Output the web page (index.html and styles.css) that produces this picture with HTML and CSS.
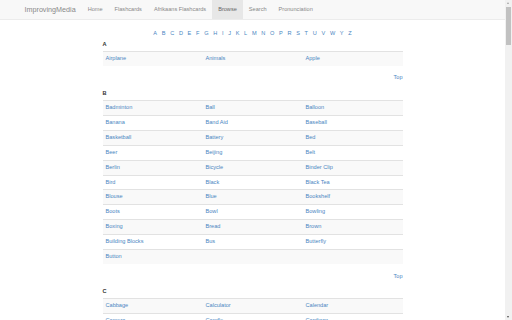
FILE: index.html
```html
<!DOCTYPE html>
<html lang="en">
<head>
    <meta charset="UTF-8">
    <meta name="viewport" content="width=device-width, initial-scale=1.0">
    <title>ImprovingMedia - Browse</title>
    <link rel="stylesheet" href="styles.css">
</head>
<body>
    <nav class="navbar">
        <div class="nav-inner">
            <a class="brand" href="#">ImprovingMedia</a>
            <ul class="nav-links">
                <li><a href="#">Home</a></li>
                <li><a href="#">Flashcards</a></li>
                <li><a href="#">Afrikaans Flashcards</a></li>
                <li class="active"><a href="#">Browse</a></li>
                <li><a href="#">Search</a></li>
                <li><a href="#">Pronunciation</a></li>
            </ul>
        </div>
    </nav>
    <div class="page" id="top">
        <div class="alphabet">
            <a href="#A">A</a><a href="#B">B</a><a href="#C">C</a><a href="#D">D</a><a href="#E">E</a><a href="#F">F</a><a href="#G">G</a><a href="#H">H</a><a href="#I">I</a><a href="#J">J</a><a href="#K">K</a><a href="#L">L</a><a href="#M">M</a><a href="#N">N</a><a href="#O">O</a><a href="#P">P</a><a href="#R">R</a><a href="#S">S</a><a href="#T">T</a><a href="#U">U</a><a href="#V">V</a><a href="#W">W</a><a href="#Y">Y</a><a href="#Z">Z</a>
        </div>

        <div class="letter-section" id="A">
            <h5>A</h5>
            <table class="word-table">
                <tr><td><a href="#">Airplane</a></td><td><a href="#">Animals</a></td><td><a href="#">Apple</a></td></tr>
            </table>
            <div class="top-link"><a href="#top">Top</a></div>
        </div>

        <div class="letter-section" id="B">
            <h5>B</h5>
            <table class="word-table">
                <tr><td><a href="#">Badminton</a></td><td><a href="#">Ball</a></td><td><a href="#">Balloon</a></td></tr>
                <tr><td><a href="#">Banana</a></td><td><a href="#">Band Aid</a></td><td><a href="#">Baseball</a></td></tr>
                <tr><td><a href="#">Basketball</a></td><td><a href="#">Battery</a></td><td><a href="#">Bed</a></td></tr>
                <tr><td><a href="#">Beer</a></td><td><a href="#">Beijing</a></td><td><a href="#">Belt</a></td></tr>
                <tr><td><a href="#">Berlin</a></td><td><a href="#">Bicycle</a></td><td><a href="#">Binder Clip</a></td></tr>
                <tr><td><a href="#">Bird</a></td><td><a href="#">Black</a></td><td><a href="#">Black Tea</a></td></tr>
                <tr><td><a href="#">Blouse</a></td><td><a href="#">Blue</a></td><td><a href="#">Bookshelf</a></td></tr>
                <tr><td><a href="#">Boots</a></td><td><a href="#">Bowl</a></td><td><a href="#">Bowling</a></td></tr>
                <tr><td><a href="#">Boxing</a></td><td><a href="#">Bread</a></td><td><a href="#">Brown</a></td></tr>
                <tr><td><a href="#">Building Blocks</a></td><td><a href="#">Bus</a></td><td><a href="#">Butterfly</a></td></tr>
                <tr><td><a href="#">Button</a></td><td></td><td></td></tr>
            </table>
            <div class="top-link"><a href="#top">Top</a></div>
        </div>

        <div class="letter-section" id="C">
            <h5>C</h5>
            <table class="word-table">
                <tr><td><a href="#">Cabbage</a></td><td><a href="#">Calculator</a></td><td><a href="#">Calendar</a></td></tr>
                <tr><td><a href="#">Camera</a></td><td><a href="#">Candle</a></td><td><a href="#">Cardigan</a></td></tr>
                <tr><td><a href="#">Carrot</a></td><td><a href="#">Cat</a></td><td><a href="#">Chair</a></td></tr>
                <tr><td><a href="#">Cheese</a></td><td><a href="#">Chicken</a></td><td><a href="#">Clock</a></td></tr>
                <tr><td><a href="#">Cloud</a></td><td><a href="#">Coffee</a></td><td><a href="#">Computer</a></td></tr>
                <tr><td><a href="#">Cow</a></td><td><a href="#">Cup</a></td><td></td></tr>
            </table>
            <div class="top-link"><a href="#top">Top</a></div>
        </div>

        <div class="letter-section" id="D">
            <h5>D</h5>
            <table class="word-table">
                <tr><td><a href="#">Dance</a></td><td><a href="#">Desk</a></td><td><a href="#">Dog</a></td></tr>
                <tr><td><a href="#">Door</a></td><td><a href="#">Dress</a></td><td><a href="#">Duck</a></td></tr>
            </table>
            <div class="top-link"><a href="#top">Top</a></div>
        </div>

        <div class="letter-section" id="E">
            <h5>E</h5>
            <table class="word-table">
                <tr><td><a href="#">Ear</a></td><td><a href="#">Egg</a></td><td><a href="#">Elephant</a></td></tr>
                <tr><td><a href="#">Eye</a></td><td></td><td></td></tr>
            </table>
            <div class="top-link"><a href="#top">Top</a></div>
        </div>

        <div class="letter-section" id="F">
            <h5>F</h5>
            <table class="word-table">
                <tr><td><a href="#">Fish</a></td><td><a href="#">Flower</a></td><td><a href="#">Fork</a></td></tr>
                <tr><td><a href="#">Friday</a></td><td><a href="#">Frog</a></td><td></td></tr>
            </table>
            <div class="top-link"><a href="#top">Top</a></div>
        </div>

        <div class="letter-section" id="G">
            <h5>G</h5>
            <table class="word-table">
                <tr><td><a href="#">Garden</a></td><td><a href="#">Glass</a></td><td><a href="#">Grapes</a></td></tr>
                <tr><td><a href="#">Green</a></td><td></td><td></td></tr>
            </table>
            <div class="top-link"><a href="#top">Top</a></div>
        </div>

        <div class="letter-section" id="H">
            <h5>H</h5>
            <table class="word-table">
                <tr><td><a href="#">Hair</a></td><td><a href="#">Hammer</a></td><td><a href="#">Hand</a></td></tr>
                <tr><td><a href="#">Hat</a></td><td><a href="#">Horse</a></td><td><a href="#">House</a></td></tr>
            </table>
            <div class="top-link"><a href="#top">Top</a></div>
        </div>

        <div class="letter-section" id="I">
            <h5>I</h5>
            <table class="word-table">
                <tr><td><a href="#">Ice Cream</a></td><td><a href="#">Island</a></td><td></td></tr>
            </table>
            <div class="top-link"><a href="#top">Top</a></div>
        </div>

        <div class="letter-section" id="J">
            <h5>J</h5>
            <table class="word-table">
                <tr><td><a href="#">Jacket</a></td><td><a href="#">Juice</a></td><td></td></tr>
            </table>
            <div class="top-link"><a href="#top">Top</a></div>
        </div>

        <div class="letter-section" id="K">
            <h5>K</h5>
            <table class="word-table">
                <tr><td><a href="#">Kettle</a></td><td><a href="#">Key</a></td><td><a href="#">Kitchen</a></td></tr>
            </table>
            <div class="top-link"><a href="#top">Top</a></div>
        </div>

        <div class="letter-section" id="L">
            <h5>L</h5>
            <table class="word-table">
                <tr><td><a href="#">Lamp</a></td><td><a href="#">Leaf</a></td><td><a href="#">Lemon</a></td></tr>
                <tr><td><a href="#">Lion</a></td><td></td><td></td></tr>
            </table>
            <div class="top-link"><a href="#top">Top</a></div>
        </div>

        <div class="letter-section" id="M">
            <h5>M</h5>
            <table class="word-table">
                <tr><td><a href="#">Milk</a></td><td><a href="#">Monday</a></td><td><a href="#">Monkey</a></td></tr>
                <tr><td><a href="#">Moon</a></td><td><a href="#">Mouse</a></td><td></td></tr>
            </table>
            <div class="top-link"><a href="#top">Top</a></div>
        </div>

        <div class="letter-section" id="N">
            <h5>N</h5>
            <table class="word-table">
                <tr><td><a href="#">Nose</a></td><td><a href="#">Notebook</a></td><td></td></tr>
            </table>
            <div class="top-link"><a href="#top">Top</a></div>
        </div>

        <div class="letter-section" id="O">
            <h5>O</h5>
            <table class="word-table">
                <tr><td><a href="#">Orange</a></td><td><a href="#">Owl</a></td><td></td></tr>
            </table>
            <div class="top-link"><a href="#top">Top</a></div>
        </div>

        <div class="letter-section" id="P">
            <h5>P</h5>
            <table class="word-table">
                <tr><td><a href="#">Pen</a></td><td><a href="#">Pencil</a></td><td><a href="#">Pizza</a></td></tr>
                <tr><td><a href="#">Plate</a></td><td><a href="#">Purple</a></td><td></td></tr>
            </table>
            <div class="top-link"><a href="#top">Top</a></div>
        </div>

        <div class="letter-section" id="R">
            <h5>R</h5>
            <table class="word-table">
                <tr><td><a href="#">Rabbit</a></td><td><a href="#">Rain</a></td><td><a href="#">Red</a></td></tr>
                <tr><td><a href="#">Rice</a></td><td></td><td></td></tr>
            </table>
            <div class="top-link"><a href="#top">Top</a></div>
        </div>

        <div class="letter-section" id="S">
            <h5>S</h5>
            <table class="word-table">
                <tr><td><a href="#">Shirt</a></td><td><a href="#">Shoes</a></td><td><a href="#">Snake</a></td></tr>
                <tr><td><a href="#">Spoon</a></td><td><a href="#">Sun</a></td><td></td></tr>
            </table>
            <div class="top-link"><a href="#top">Top</a></div>
        </div>

        <div class="letter-section" id="T">
            <h5>T</h5>
            <table class="word-table">
                <tr><td><a href="#">Table</a></td><td><a href="#">Tea</a></td><td><a href="#">Tiger</a></td></tr>
                <tr><td><a href="#">Tomato</a></td><td><a href="#">Train</a></td><td><a href="#">Tree</a></td></tr>
            </table>
            <div class="top-link"><a href="#top">Top</a></div>
        </div>

        <div class="letter-section" id="U">
            <h5>U</h5>
            <table class="word-table">
                <tr><td><a href="#">Umbrella</a></td><td></td><td></td></tr>
            </table>
            <div class="top-link"><a href="#top">Top</a></div>
        </div>

        <div class="letter-section" id="V">
            <h5>V</h5>
            <table class="word-table">
                <tr><td><a href="#">Violin</a></td><td></td><td></td></tr>
            </table>
            <div class="top-link"><a href="#top">Top</a></div>
        </div>

        <div class="letter-section" id="W">
            <h5>W</h5>
            <table class="word-table">
                <tr><td><a href="#">Water</a></td><td><a href="#">Watch</a></td><td><a href="#">Window</a></td></tr>
                <tr><td><a href="#">Wolf</a></td><td></td><td></td></tr>
            </table>
            <div class="top-link"><a href="#top">Top</a></div>
        </div>

        <div class="letter-section" id="Y">
            <h5>Y</h5>
            <table class="word-table">
                <tr><td><a href="#">Yellow</a></td><td></td><td></td></tr>
            </table>
            <div class="top-link"><a href="#top">Top</a></div>
        </div>

        <div class="letter-section" id="Z">
            <h5>Z</h5>
            <table class="word-table">
                <tr><td><a href="#">Zebra</a></td><td></td><td></td></tr>
            </table>
            <div class="top-link"><a href="#top">Top</a></div>
        </div>
    </div>

    <div class="scrollbar">
        <span class="scroll-arrow up"></span>
        <span class="scroll-thumb"></span>
        <span class="scroll-arrow down"></span>
    </div>
</body>
</html>
```

FILE: styles.css
```css
body {
    margin: 0 7px 0 0;
    font-family: 'Liberation Sans', Arial, sans-serif;
    font-size: 5.6px;
    line-height: 8px;
    color: #333;
    background: #fff;
}
a {
    color: #4a86c2;
    text-decoration: none;
}
.navbar {
    height: 19px;
    background-color: #f8f8f8;
    border-bottom: 1px solid #ececec;
}
.nav-inner {
    width: 468px;
    margin: 0 auto;
    display: flex;
}
.brand {
    padding: 0 6px;
    font-size: 7.2px;
    line-height: 19px;
    color: #888;
}
.nav-links {
    display: flex;
    list-style: none;
    margin: 0;
    padding: 0;
}
.nav-links a {
    display: block;
    padding: 0 6px;
    line-height: 19px;
    color: #888;
}
.nav-links .active a {
    background-color: #e7e7e7;
    color: #666;
}
.page {
    width: 300px;
    margin: 0 auto;
}
.alphabet {
    display: flex;
    justify-content: center;
    gap: 4.7px;
    padding-top: 9px;
}
.letter-section h5 {
    margin: 7.5px 0 3px;
    font-size: 5.6px;
    line-height: 8px;
    font-weight: bold;
}
.alphabet + .letter-section h5 {
    margin-top: 3px;
}
.word-table {
    width: 100%;
    border-collapse: collapse;
    table-layout: fixed;
    margin-bottom: 7.5px;
}
.word-table td {
    padding: 3px;
    line-height: 7.92px;
    border-top: 1px solid #e2e2e2;
    vertical-align: top;
}
.word-table tr:nth-child(odd) td {
    background-color: #f9f9f9;
}
.top-link {
    text-align: right;
}

/* window scrollbar */
.scrollbar {
    position: fixed;
    top: 0;
    right: 0;
    width: 7px;
    height: 100%;
    background-color: #f1f1f1;
}
.scroll-thumb {
    position: absolute;
    top: 7px;
    left: 1px;
    width: 5px;
    height: 38px;
    background-color: #c1c1c1;
}
.scroll-arrow {
    position: absolute;
    left: 2px;
    width: 0;
    height: 0;
    border-left: 1.5px solid transparent;
    border-right: 1.5px solid transparent;
}
.scroll-arrow.up {
    top: 2px;
    border-bottom: 2px solid #a3a3a3;
}
.scroll-arrow.down {
    bottom: 2px;
    border-top: 2px solid #505050;
}
```
